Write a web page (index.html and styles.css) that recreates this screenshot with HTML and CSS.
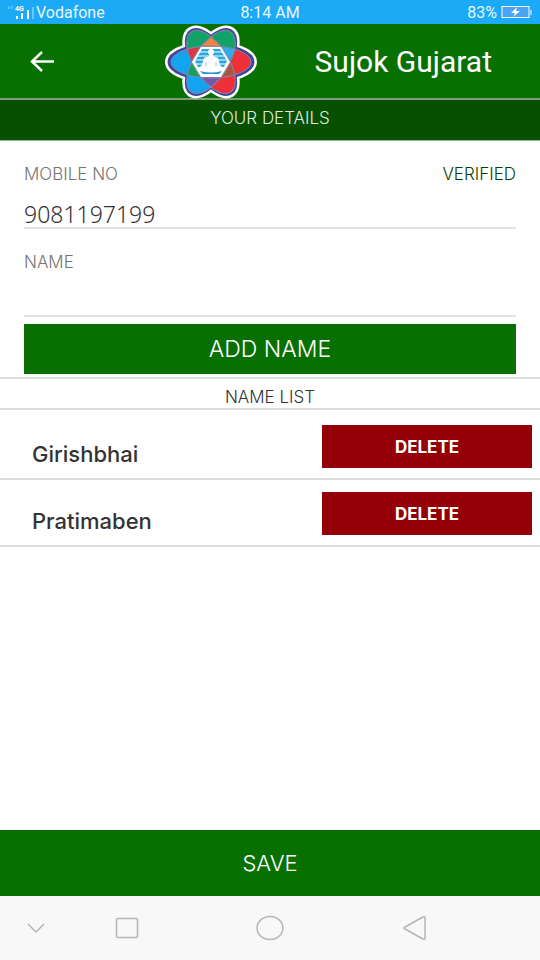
FILE: index.html
```
<!DOCTYPE html>
<html lang="en">
<head>
    <meta charset="UTF-8">
    <meta name="viewport" content="width=device-width, initial-scale=1.0">
    <title>Sujok Gujarat</title>
    <link rel="stylesheet" href="styles.css">
</head>
<body>
    <div class="status-bar">
        <div class="carrier">
            <svg width="28" height="16" viewBox="0 0 28 16" aria-hidden="true">
                <path d="M1 2v3M4 2v3" stroke="#8cd5ff" stroke-width="1"/>
                <text x="7" y="7" class="network">4G</text>
                <path d="M9 12v3M14 9v6M20 6v9" stroke="#fff" stroke-width="2"/>
                <path d="M25 3v12" stroke="#b8e4ff" stroke-width="1"/>
            </svg>
            <span>Vodafone</span>
        </div>
        <div>8:14 AM</div>
        <div class="battery">
            <span>83%</span>
            <svg width="31" height="14" viewBox="0 0 31 14" aria-hidden="true">
                <rect x="1" y="1.500" width="27" height="11" fill="#4aa3f5" stroke="#fff"/>
                <path d="M30 5v5" stroke="#fff"/>
                <path d="M16 2l-6 6h4l-2 4 7-6h-4z" fill="#fff"/>
            </svg>
        </div>
    </div>

    <header class="app-header">
        <button class="back" type="button" aria-label="Back">
            <svg width="26" height="22" viewBox="0 0 26 22" fill="none" stroke="#fff" stroke-width="2.500">
                <path d="M25 10.500H3M13 1L3 10.500l10 9.500"/>
            </svg>
        </button>
        <svg class="logo" width="94" height="76" viewBox="-47 -38 94 76" role="img" aria-label="Sujok logo">
            <defs>
                <linearGradient id="side" x1="0" x2="1">
                    <stop offset=".5" stop-color="#10a5ee"/>
                    <stop offset=".5" stop-color="#f03038"/>
                </linearGradient>
                <linearGradient id="left" x1="0" x2="1">
                    <stop offset=".5" stop-color="#10a267"/>
                    <stop offset=".5" stop-color="#f03038"/>
                </linearGradient>
                <linearGradient id="right" x1="0" x2="1">
                    <stop offset=".5" stop-color="#10a5ee"/>
                    <stop offset=".5" stop-color="#10a267"/>
                </linearGradient>
                <g id="petals">
                    <ellipse rx="42" ry="17"/>
                    <ellipse rx="37" ry="17" transform="rotate(57)"/>
                    <ellipse rx="37" ry="17" transform="rotate(-57)"/>
                </g>
            </defs>
            <use href="#petals" fill="#fff" stroke="#fff" stroke-width="8"/>
            <use href="#petals" fill="#40459b" stroke="#40459b" stroke-width="3"/>
            <ellipse rx="40" ry="16" fill="url(#side)"/>
            <ellipse rx="36" ry="17" fill="url(#left)" transform="rotate(57)"/>
            <ellipse rx="36" ry="17" fill="url(#right)" transform="rotate(-57)"/>
            <path d="M0-25L11-15H-11z" fill="#e88743"/>
            <path d="M10-15l15 2-7 13z" fill="#2caeea"/>
            <path d="M18 0l7 13-15 2z" fill="#a35842"/>
            <path d="M0 25l11-10H-11z" fill="#7557a5"/>
            <path d="M-18 0l-7 13 15 2z" fill="#16a256"/>
            <path d="M-18 0l-7-13 15-2z" fill="#df3645"/>
            <g fill="none" stroke="#8b83ac" stroke-width="1">
                <ellipse rx="40" ry="16"/>
                <ellipse rx="36" ry="17" transform="rotate(57)"/>
                <ellipse rx="36" ry="17" transform="rotate(-57)"/>
            </g>
            <path d="M-10-15H10L19 0 10 15H-10L-19 0z" fill="#fff"/>
            <path d="M-9-13H9L16-1 13 5H-13L-16-1z" fill="#27a7dc"/>
            <path d="M-12-10H12M-14-6H14M-16-2H16M-16 2H16" stroke="#fff" stroke-width="1"/>
            <path d="M-11 9Q0 12 11 9L8 12H-8z" fill="#2595cf"/>
            <circle cy="-10" r="3" fill="#fff"/>
            <path d="M-2-9H2V-6L7-4 9 3 13 7Q12 9 0 9-12 9-13 7L-9 3-7-4-2-6z" fill="#fff"/>
            <path d="M-5 0v4M5 0v4" fill="none" stroke="#8acbe8"/>
        </svg>
        <h1>Sujok Gujarat</h1>
    </header>

    <h2 class="page-title">YOUR DETAILS</h2>

    <main>
        <form class="details">
            <div class="field">
                <div class="field-head">
                    <label for="mobile">MOBILE NO</label>
                    <span class="verified">VERIFIED</span>
                </div>
                <input id="mobile" type="tel" value="9081197199">
            </div>
            <div class="field">
                <div class="field-head">
                    <label for="name">NAME</label>
                </div>
                <input id="name" type="text">
            </div>
            <button class="add" type="button">ADD NAME</button>
        </form>

        <h3 class="list-title">NAME LIST</h3>
        <ul class="names">
            <li>
                <span>Girishbhai</span>
                <button class="delete" type="button">DELETE</button>
            </li>
            <li>
                <span>Pratimaben</span>
                <button class="delete" type="button">DELETE</button>
            </li>
        </ul>
    </main>

    <button class="save" type="button">SAVE</button>

    <nav class="nav-bar">
        <button type="button" aria-label="Hide">
            <svg width="24" height="26" viewBox="0 0 24 26"><path d="M4 9l8 8 8-8"/></svg>
        </button>
        <button type="button" aria-label="Recent apps">
            <svg width="24" height="26" viewBox="0 0 24 26"><rect x="1.500" y="3.500" width="21" height="19" rx="1"/></svg>
        </button>
        <button type="button" aria-label="Home">
            <svg width="28" height="26" viewBox="0 0 28 26"><ellipse cx="14" cy="13" rx="13" ry="11.500"/></svg>
        </button>
        <button type="button" aria-label="Previous">
            <svg width="24" height="26" viewBox="0 0 24 26"><path d="M2 12L20 2q2-1 2 1v20q0 2-2 1L2 14q-2-1 0-2z"/></svg>
        </button>
    </nav>
</body>
</html>
```

FILE: styles.css
```
* {
    margin: 0;
    padding: 0;
    box-sizing: border-box;
}

body {
    display: flex;
    flex-direction: column;
    min-height: 100vh;
    background: #fff;
    color: #333;
    font-family: Inter, sans-serif;
}

button {
    border: none;
    font-family: inherit;
    cursor: pointer;
}

svg {
    display: block;
}

.status-bar {
    display: grid;
    grid-template-columns: 1fr auto 1fr;
    align-items: center;
    height: 24px;
    padding: 0 8px;
    background: #1caaf6;
    color: #e8f7ff;
    font-family: Roboto, sans-serif;
    font-size: 16px;
}

.carrier,
.battery {
    display: flex;
    align-items: center;
}

.battery {
    justify-content: flex-end;
    gap: 4px;
}

.network {
    fill: #fff;
    font-size: 7px;
    font-weight: bold;
}

.app-header {
    display: grid;
    grid-template-columns: 164px 94px 1fr;
    align-items: center;
    height: 76px;
    border-bottom: 2px solid #829a7d;
    background: #087000;
    color: #fff;
}

.back {
    width: 84px;
    height: 74px;
    padding-left: 29px;
    background: none;
}

.logo {
    z-index: 1;
}

.app-header h1 {
    padding-right: 48px;
    font-family: Roboto, sans-serif;
    font-size: 30px;
    font-weight: 400;
    line-height: 36px;
    text-align: right;
}

.page-title {
    height: 41px;
    padding-top: 8px;
    border-bottom: 1px solid #8dbb8b;
    background: #065000;
    color: #dfe9df;
    font-size: 17px;
    font-weight: 300;
    line-height: 20px;
    text-align: center;
}

main {
    flex: 1;
}

.details {
    padding: 24px 24px 3px;
}

.field {
    margin-bottom: 24px;
}

.field:nth-child(2) {
    margin-bottom: 7px;
}

.field-head {
    display: flex;
    justify-content: space-between;
    color: #757575;
    font-size: 17px;
    font-weight: 300;
    line-height: 18px;
}

.verified {
    color: #063f06;
}

.field input {
    display: block;
    width: 100%;
    height: 46px;
    padding-top: 18px;
    border: none;
    border-bottom: 2px solid #e2e2e2;
    outline: none;
    background: none;
    color: #333;
    font-family: "Noto Sans", sans-serif;
    font-size: 23px;
    font-weight: 300;
}

.add {
    display: block;
    width: 100%;
    height: 50px;
    background: #087000;
    color: #fff;
    font-size: 23px;
    font-weight: 300;
}

.list-title {
    padding: 9px 0 2px;
    border: solid #dcdedd;
    border-width: 2px 0;
    font-size: 17px;
    font-weight: 300;
    line-height: 18px;
    text-align: center;
}

.names {
    padding-top: 3px;
    list-style: none;
}

.names li {
    display: flex;
    align-items: flex-end;
    justify-content: space-between;
    padding: 12px 8px 10px 32px;
    border-bottom: 2px solid #dcdedd;
    font-size: 22px;
    font-weight: 500;
    line-height: 28px;
}

.delete {
    width: 42%;
    height: 43px;
    background: #930008;
    color: #fff;
    font-size: 17px;
    font-weight: 700;
}

.save {
    height: 66px;
    background: #087000;
    color: #fff;
    font-size: 22px;
    font-weight: 300;
}

.nav-bar {
    display: grid;
    grid-template-columns: 72px 110px 176px 114px;
    align-items: center;
    justify-items: center;
    height: 64px;
    background: #f8f8f8;
}

.nav-bar button {
    padding: 8px;
    background: none;
}

.nav-bar svg {
    fill: none;
    stroke: #b5b5b5;
    stroke-width: 1.500;
}
```
